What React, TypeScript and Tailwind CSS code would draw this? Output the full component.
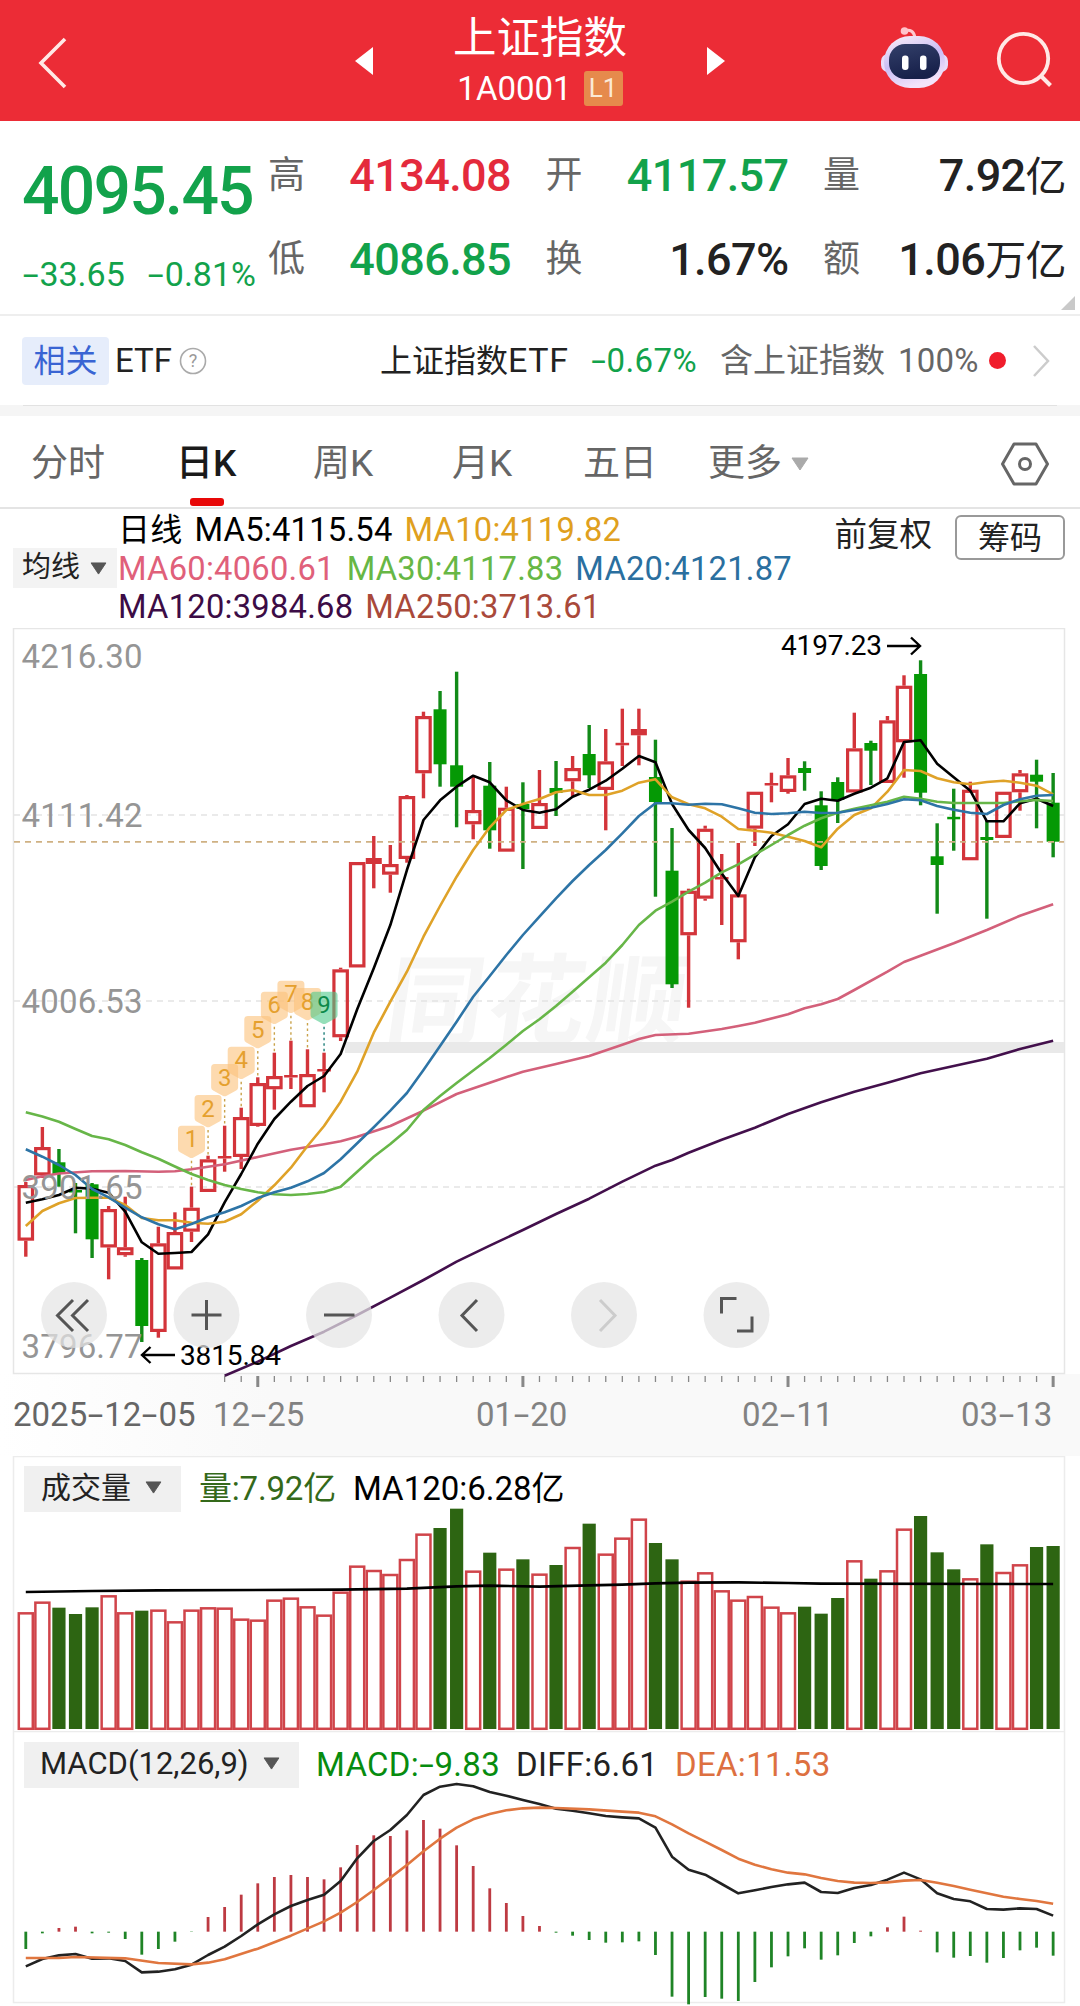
import type { ReactNode } from 'react'

type Candle = [kind: 'r' | 'g', high: number, top: number, bottom: number, low: number]

const FONT = 'font-[Roboto,"Noto_Sans_CJK_SC",sans-serif]'
const RED = '#d3343a'
const GREEN = '#059905'

const X0 = 25.8
const STEP = 16.57
const xAt = (i: number) => X0 + i * STEP

const candles: Candle[] = [
  ['r', 1182, 1185, 1240.7, 1256.7], ['r', 1127, 1147, 1175.5, 1178], ['g', 1149, 1162.3, 1174, 1186.7],
  ['g', 1183, 1190, 1192.5, 1233.3], ['g', 1183, 1184.3, 1239.3, 1258], ['r', 1206, 1209, 1247.5, 1279.3],
  ['r', 1196.7, 1247.2, 1255.2, 1256.7], ['g', 1258, 1260, 1326, 1342], ['r', 1226.7, 1243.3, 1332, 1337.7],
  ['r', 1212.3, 1232, 1269.5, 1269], ['r', 1186.7, 1207.7, 1231.7, 1242], ['r', 1155.7, 1159.3, 1192, 1192],
  ['r', 1125.7, 1156, 1158.5, 1171.7], ['r', 1107.7, 1117, 1157, 1169], ['r', 1077.3, 1083, 1126, 1126.7],
  ['r', 1052.7, 1076, 1089.3, 1109.7], ['r', 1040.7, 1075, 1077.5, 1089], ['r', 1049.3, 1074, 1107.3, 1107],
  ['r', 1052.7, 1069, 1071.5, 1092.3], ['r', 967.7, 969.3, 1037.3, 1041], ['r', 862, 862, 967.5, 967],
  ['r', 836, 858, 864, 888.3], ['r', 845, 864, 874.7, 892.7], ['r', 795, 796, 859, 862.7],
  ['r', 711.7, 716, 773.3, 798.3], ['g', 691, 709.3, 764.3, 786.7], ['g', 671.7, 765.3, 786.7, 827.3],
  ['r', 776, 810, 824.3, 839.3], ['g', 762, 785.7, 830.3, 848.7], ['r', 786.7, 807.7, 851.7, 851],
  ['g', 782.3, 804, 809, 869], ['r', 770, 803, 829, 829], ['g', 761, 788, 793, 816],
  ['r', 756, 768, 781.3, 796.7], ['g', 725, 754, 775.3, 788], ['r', 729, 761.3, 790, 830.3],
  ['r', 708.7, 742.8, 745.3, 766], ['r', 708.7, 729, 735.3, 765.3], ['g', 739.7, 777, 802, 896.7],
  ['g', 828, 870.7, 984.3, 988], ['r', 888.7, 890.7, 935.3, 1007.7], ['r', 825.7, 828.7, 898.7, 900.7],
  ['r', 854, 877, 879.5, 925], ['r', 843, 894.3, 942.3, 959.3], ['r', 792, 791.7, 828.7, 846],
  ['r', 772.7, 783, 785.5, 802.3], ['r', 758, 775.3, 792, 793.7], ['g', 761.3, 768, 773, 790.7],
  ['g', 791.3, 805.3, 866, 870], ['g', 777.3, 782, 800, 823], ['r', 712.7, 748.3, 792.5, 792],
  ['g', 740.7, 743, 750.7, 785], ['r', 716, 720.3, 783, 782.7], ['r', 675.3, 685.7, 742.3, 777.7],
  ['g', 660.3, 674, 792.7, 805.3], ['g', 823.3, 856.3, 865, 913.7], ['g', 788.7, 816.8, 819.3, 850.7],
  ['r', 781.7, 789.7, 860.3, 860], ['g', 820, 837, 840, 918.7], ['r', 792, 791.7, 838, 838],
  ['r', 770, 773.3, 792.3, 810.7], ['g', 759.7, 774.7, 781.7, 828.3], ['g', 773, 802.7, 841.7, 857.3],
]

const ma5 = [
  1202.7, 1199.3, 1195, 1187.7, 1188.7, 1192.7, 1211.7, 1242.3, 1253.7, 1253, 1252, 1234.3, 1202.3, 1174, 1143.7,
  1119, 1101.7, 1086, 1076, 1054, 1009.3, 968.3, 925, 870, 820, 800.3, 786.7, 775.7, 782.3, 800.3, 810, 812.7,
  809.3, 796.7, 789.7, 780.7, 768.7, 756, 762.3, 804, 830, 848, 873.5, 896, 857.3, 836, 824.3, 804, 798.7, 800.7,
  793.7, 787.7, 778.3, 742, 740.3, 763.7, 777.3, 790.7, 821.3, 821.3, 803.3, 798.7, 806,
]
const ma10 = [
  1226, 1211, 1203.3, 1198, 1197.7, 1197.7, 1205, 1218, 1220.3, 1220.3, 1222.7, 1223.7, 1221.7, 1214.3, 1200.7,
  1185.3, 1167.7, 1146, 1126, 1101.7, 1071.7, 1032.7, 1001.7, 971.7, 936.7, 906, 876.7, 850, 827.3, 810, 804, 799,
  792.3, 790, 795, 795, 790.7, 782.7, 779.3, 797.3, 804.3, 808.3, 816.7, 829, 830.7, 832.7, 836.7, 841, 847.3,
  828.7, 815, 808.3, 791.7, 770, 771, 778.3, 782.3, 784.3, 782, 780.7, 782.7, 785.7, 794.3,
]
const ma20 = [
  1149.3, 1156.7, 1165, 1175, 1189, 1197.3, 1207.7, 1217.3, 1224.3, 1229.3, 1224, 1217.3, 1212.3, 1206, 1198,
  1192.3, 1187.7, 1181.3, 1173, 1159.3, 1143.3, 1127.3, 1110.7, 1093, 1070, 1046, 1021.7, 996.7, 976, 955, 935,
  916.7, 898.3, 881, 865, 850, 833.3, 816, 803.3, 803.3, 804.7, 803.7, 804.3, 808.3, 812.7, 814, 813.3, 811.7,
  813, 812.7, 810, 807.7, 804, 799.3, 800.3, 806, 809.7, 812.7, 814, 805, 799.3, 795.7, 795,
]
const ma30 = [
  1112.3, 1116.5, 1121.7, 1129, 1136, 1139.3, 1145, 1152.3, 1158.7, 1166.5, 1174, 1180, 1185, 1189, 1192.3, 1194.3,
  1195, 1194, 1192, 1186.7, 1171.7, 1156.7, 1144, 1130, 1110, 1096, 1083, 1070.5, 1058, 1044.7, 1031, 1019.3, 1006,
  991.7, 977.3, 962.7, 945, 925, 910.7, 901.7, 891.7, 882.7, 872.3, 864.3, 854.7, 845, 835, 825.7, 818.3, 812.7,
  808.7, 805.3, 801.7, 796.7, 798.7, 801.7, 803, 803, 803, 803, 801.3, 800, 801,
]

// sparse averages: [index, y]
const ma60: [number, number][] = [
  [0, 1180], [1, 1176.3], [2, 1173.5], [4, 1171.3], [6, 1171], [8, 1171.7], [9, 1171.3], [10, 1169.3], [12, 1164.3],
  [14, 1157], [16, 1149.7], [18, 1144.3], [19, 1141.3], [20, 1136.7], [22, 1126], [24, 1110.7], [26, 1094],
  [28, 1082.7], [30, 1071.7], [32, 1064], [34, 1056], [36, 1044.7], [37, 1039], [38, 1035], [40, 1033.7],
  [42, 1029], [43, 1026], [44, 1022.7], [46, 1014.3], [47, 1008.3], [48, 1004.3], [49, 999], [50, 990],
  [52, 971.7], [53, 962], [54, 955.7], [56, 943.3], [58, 930], [60, 915.7], [61, 910], [62, 904.3],
]
const ma120: [number, number][] = [
  [12, 1375.7], [14, 1361.7], [16, 1346], [18, 1331.7], [20, 1315], [22, 1297.7], [24, 1280], [26, 1261.7],
  [28, 1245.7], [30, 1230], [32, 1214], [34, 1198.7], [36, 1181.7], [38, 1165.7], [39, 1160], [40, 1152.7],
  [42, 1139.7], [44, 1127.7], [46, 1114], [48, 1102.3], [50, 1091.7], [52, 1082.7], [54, 1073.3], [56, 1066],
  [58, 1058.7], [60, 1049], [62, 1040.7],
]

// TD sequence marks: index is 10 + n
const marks = [1125.7, 1095, 1064, 1046.7, 1016, 991.7, 980.7, 988, 991.7]

// volume and MACD values are stored in thirds of a pixel
const volumes = [
  487, 455, -473, -492, -472, 436, 487, -482, 479, 514, 479, 472, 473, 506, 509, 449, 443, 469, 494, 425, 347, 360,
  372, 327, 251, -234, -176, 362, -308, 356, -328, 371, -345, 291, -221, 311, 263, 206, -279, -328, 392, 367, 421,
  449, 438, 470, 487, -470, -491, -444, 331, -386, 361, 236, -198, -307, -358, 385, -283, 366, 343, -291, -288,
]
const volumeMa: [number, number][] = [
  [0, 426], [4, 423], [8, 421], [19, 419], [23, 416], [26, 409], [28, 407], [31, 410], [34, 406], [36, 404],
  [38, 400], [40, 398], [43, 397], [46, 399], [48, 401], [62, 402],
]
const macd = [
  657, 610, 594, 590, 610, 608, 627, 674, 657, 635, 606, 561, 531, 494, 460, 441, 435, 441, 448, 412, 345, 316, 318,
  301, 270, 296, 346, 408, 475, 519, 558, 588, 608, 617, 630, 638, 637, 634, 675, 800, 823, 801, 806, 813, 756, 712,
  679, 655, 689, 676, 639, 619, 592, 560, 602, 667, 683, 678, 698, 684, 661, 653, 677,
]
const diff = [
  709, 687, 676, 672, 686, 685, 693, 727, 725, 718, 704, 675, 650, 618, 583, 553, 528, 510, 494, 453, 385, 333, 300,
  255, 195, 170, 162, 169, 186, 197, 210, 222, 236, 242, 250, 258, 262, 265, 293, 380, 419, 434, 462, 490, 481, 471,
  463, 458, 486, 489, 474, 465, 449, 428, 448, 490, 507, 514, 537, 539, 535, 537, 557,
]
const dea: [number, number][] = [
  [0, 684], [2, 684], [3, 681], [6, 685], [8, 699], [10, 703], [11, 698], [12, 688], [14, 656], [16, 617], [18, 574],
  [19, 548], [20, 516], [21, 480], [22, 443], [23, 405], [24, 364], [25, 326], [26, 293], [27, 268], [28, 252],
  [29, 241], [30, 235], [31, 233], [32, 234], [34, 238], [36, 245], [37, 248], [38, 259], [39, 283], [40, 310],
  [41, 335], [42, 360], [43, 386], [44, 404], [45, 418], [46, 428], [47, 433], [48, 444], [49, 453], [50, 458],
  [51, 459], [52, 457], [53, 452], [54, 450], [55, 458], [56, 468], [57, 479], [58, 490], [59, 500], [60, 507],
  [61, 513], [62, 521],
]

const dense = (ys: number[]) => ys.map((y, i) => `${xAt(i)},${y}`).join(' ')
const sparse = (pts: [number, number][]) => pts.map(([i, y]) => `${xAt(i)},${y}`).join(' ')

function Line({ points, color, width = 2.6 }: { points: string; color: string; width?: number }) {
  return <polyline points={points} fill="none" stroke={color} strokeWidth={width} strokeLinejoin="round" />
}

function Dash({ wide = false }: { wide?: boolean }) {
  return <span className={wide ? 'inline-block scale-x-[1.7] mx-[4px]' : 'inline-block scale-x-[1.6] mx-[3px]'}>-</span>
}

function Caret({ className }: { className: string }) {
  return (
    <svg viewBox="0 0 18 14" className={className}>
      <path d="M1 1h16L9 13z" fill="currentColor" stroke="currentColor" strokeLinejoin="round" />
    </svg>
  )
}

function Header() {
  return (
    <header className="flex h-[121px] bg-[#ec2c36] text-white">
      <svg viewBox="0 0 340 121" className="w-[340px] h-[121px]">
        <path d="M65 39L41 63l24 24" fill="none" stroke="#ffe9e6" strokeWidth="3.6" />
      </svg>
      <div className="flex w-[400px] items-center justify-between pl-[15px] pr-[15px]">
        <svg viewBox="0 0 18 28" className="w-[18px] h-[28px]">
          <path d="M18 0v28L0 14z" fill="#fff" />
        </svg>
        <div className="flex flex-col items-center pt-[7px]">
          <div className="h-[64px] text-[43.5px] leading-[64px]">上证指数</div>
          <div className="flex h-[50px] items-start gap-[12px]">
            <span className="text-[33px] leading-[36px]">1A0001</span>
            <span className="flex h-[35px] w-[39px] items-center justify-center rounded-[3px] bg-[#e68a4c] text-[26px] text-[#fbe9d6]">
              L1
            </span>
          </div>
        </div>
        <svg viewBox="0 0 18 28" className="w-[18px] h-[28px]">
          <path d="M0 0v28l18-14z" fill="#fff" />
        </svg>
      </div>
      <svg viewBox="740 0 340 121" className="w-[340px] h-[121px]">
        <defs>
          <linearGradient id="head" x1="0" y1="0" x2="0.4" y2="1">
            <stop offset="0" stopColor="#fff3f8" />
            <stop offset="0.55" stopColor="#c9bdf5" />
            <stop offset="1" stopColor="#f3e3fa" />
          </linearGradient>
          <linearGradient id="visor" x1="0" y1="0" x2="0.3" y2="1">
            <stop offset="0" stopColor="#33406a" />
            <stop offset="1" stopColor="#17204a" />
          </linearGradient>
        </defs>
        <path d="M904 31c6-2 10 0 11 7" fill="none" stroke="#ffc9cf" strokeWidth="3" />
        <circle cx="904.5" cy="31" r="3.8" fill="#ffc3cb" />
        <rect x="881" y="54" width="67" height="18" rx="7" fill="#e9dcfa" />
        <rect x="884" y="36" width="61" height="52" rx="26" fill="url(#head)" />
        <rect x="889" y="44" width="51" height="35" rx="16" fill="url(#visor)" />
        <rect x="902" y="55.500" width="6.500" height="14.500" rx="3" fill="#fff" />
        <rect x="920" y="55.500" width="6.500" height="14.500" rx="3" fill="#fff" />
        <circle cx="1023.500" cy="58.500" r="24.700" fill="none" stroke="#ffe9e6" strokeWidth="3.800" />
        <path d="M1040.500 75.500l10 10" stroke="#ffe9e6" strokeWidth="4" />
      </svg>
    </header>
  )
}

function Stat({ label, value, unit, color }: { label: string; value: string; unit?: ReactNode; color: string }) {
  return (
    <div className="flex items-center justify-between">
      <span className="text-[37px] text-[#666]">{label}</span>
      <span className={`text-[45px] font-medium tracking-[-0.6px] whitespace-nowrap ${color}`}>
        {value}
        {unit && <span className="text-[41px] font-normal">{unit}</span>}
      </span>
    </div>
  )
}

function Quote() {
  return (
    <section className="relative flex h-[195px] border-b-2 border-[#eee] pl-[22px] pr-[14px]">
      <div className="w-[246px] text-[#12a24b]">
        <div className="pt-[32px] text-[66px] leading-[78px] font-medium tracking-[-1.8px]">4095.45</div>
        <div className="mt-[23px] flex justify-between pr-[12px] text-[34px] leading-[40px] whitespace-nowrap">
          <span><Dash wide />33.65</span>
          <span><Dash wide />0.81%</span>
        </div>
      </div>
      <div className="grid h-[181px] flex-1 grid-cols-[243px_243px_243px] grid-rows-2 justify-between pt-[13px]">
        <Stat label="高" color="text-[#e42a3c]" value="4134.08" />
        <Stat label="开" color="text-[#12a24b]" value="4117.57" />
        <Stat label="量" color="text-[#222]" value="7.92" unit="亿" />
        <Stat label="低" color="text-[#12a24b]" value="4086.85" />
        <Stat label="换" color="text-[#222]" value="1.67%" />
        <Stat label="额" color="text-[#222]" value="1.06" unit="万亿" />
      </div>
      <svg viewBox="0 0 14 14" className="absolute right-[5px] bottom-[4px] w-[14px] h-[14px]">
        <path d="M14 0v14H0z" fill="#c9c9c9" />
      </svg>
    </section>
  )
}

function EtfRow() {
  return (
    <section className="h-[100px] bg-[#f5f5f5]">
      <div className="flex h-[89px] items-center bg-white px-[22px] text-[32px] whitespace-nowrap text-[#222]">
        <span className="flex h-[48px] w-[87px] items-center justify-center rounded-[4px] bg-[#e6edfb] text-[#3964d3]">相关</span>
        <span className="ml-[6px] w-[58px] text-[33px]">ETF</span>
        <svg viewBox="0 0 28 28" className="ml-[6px] w-[28px] h-[28px]">
          <circle cx="14" cy="14" r="12.500" fill="none" stroke="#aaa" strokeWidth="1.600" />
          <text x="14" y="20" textAnchor="middle" fontSize="18" fill="#999">?</text>
        </svg>
        <span className="ml-[173px] w-[189px]">
          上证指数<span className="text-[34px] tracking-[0.6px]">ETF</span>
        </span>
        <span className="ml-[22px] w-[109px] text-[33px] tracking-[0.4px] text-[#12a24b]"><Dash />0.67%</span>
        <span className="ml-[20px] w-[178px] text-[33px] text-[#666]">含上证指数</span>
        <span className="w-[82px] text-[33px] tracking-[0.2px] text-[#666]">100%</span>
        <span className="ml-[9px] h-[17px] w-[17px] rounded-full bg-[#f01d2c]" />
        <svg viewBox="0 0 18 34" className="ml-[26px] w-[18px] h-[34px]">
          <path d="M2 2l14 15L2 32" fill="none" stroke="#ccc" strokeWidth="2.500" />
        </svg>
      </div>
      <div className="mx-[23px] h-px bg-[#e2e2e2]" />
    </section>
  )
}

function Tabs() {
  return (
    <nav className="flex h-[93px] items-center border-b-2 border-[#e4e4e4] pt-[5px] pl-[31px] text-[37px] whitespace-nowrap text-[#666]">
      <span className="w-[145px]">分时</span>
      <span className="relative w-[137px] font-medium text-[#1a1a1a]">
        日K
        <span className="absolute top-[62px] left-[14px] h-[8px] w-[34px] rounded-[3px] bg-[#e80808]" />
      </span>
      <span className="w-[139px]">周K</span>
      <span className="w-[131px]">月K</span>
      <span className="w-[125px]">五日</span>
      <span>更多</span>
      <Caret className="ml-[8px] w-[20px] h-[14px] text-[#aaa]" />
      <svg viewBox="0 0 48 44" className="ml-auto mr-[31px] w-[48px] h-[44px]">
        <path d="M13 2h22l11.500 20L35 42H13L1.500 22z" fill="none" stroke="#666" strokeWidth="3" strokeLinejoin="round" />
        <circle cx="24" cy="22" r="5.500" fill="none" stroke="#666" strokeWidth="3" />
      </svg>
    </nav>
  )
}

function Legend() {
  return (
    <section className="flex h-[119px] pl-[13px] pr-[15px] text-[32px] whitespace-nowrap">
      <div className="mt-[39px] flex h-[40px] w-[104px] items-center bg-[#f3f3f3] pl-[9px] text-[29px] text-[#222]">
        均线
        <Caret className="ml-[10px] w-[17px] h-[13px] text-[#555]" />
      </div>
      <div className="ml-px flex-1 text-[32.700px] leading-[38.500px] tracking-[0.250px]">
        <div className="mt-[2px] flex gap-[12px] text-black">
          <span className="flex gap-[12px]">
            <span className="text-[32px]">日线</span>
            <span className="w-[198px]">MA5:4115.54</span>
          </span>
          <span className="text-[#e0a01e]">MA10:4119.82</span>
        </div>
        <div className="flex gap-[12px]">
          <span className="text-[#e0607a]">MA60:4060.61</span>
          <span className="text-[#67b745]">MA30:4117.83</span>
          <span className="text-[#2a6f9f]">MA20:4121.87</span>
        </div>
        <div className="flex gap-[12px]">
          <span className="text-[#3c0c46]">MA120:3984.68</span>
          <span className="text-[#a9493a]">MA250:3713.61</span>
        </div>
      </div>
      <div className="flex items-start gap-[23px] pt-[6px] text-[#222]">
        <span className="text-[32.500px] leading-[40px]">前复权</span>
        <span className="flex h-[45px] w-[110px] items-center justify-center rounded-[6px] border-2 border-[#999]">筹码</span>
      </div>
    </section>
  )
}

function Bar({ i, data }: { i: number; data: Candle }) {
  const [kind, high, top, bottom, low] = data
  const x = xAt(i)
  const h = bottom - top
  if (kind === 'g') {
    return (
      <g fill={GREEN}>
        <rect x={x - 1.7} y={high} width="3.4" height={low - high} fill="#128a18" />
        <rect x={x - 6.5} y={top} width="13" height={h} />
      </g>
    )
  }
  return (
    <g fill={RED}>
      <rect x={x - 1.7} y={high} width="3.4" height={Math.max(0, top - high)} />
      <rect x={x - 1.7} y={bottom} width="3.4" height={Math.max(0, low - bottom)} />
      {h < 7.5 ? (
        <rect x={h < 3 ? x - 6.8 : x - 8} y={top} width={h < 3 ? 13.6 : 16} height={h} />
      ) : (
        <rect x={x - 6.7} y={top + 1.6} width="13.4" height={h - 3.2} fill="none" stroke={RED} strokeWidth="3.2" />
      )}
    </g>
  )
}

function Mark({ n, top }: { n: number; top: number }) {
  const x = xAt(9 + n)
  const last = n === 9
  return (
    <g>
      <path d={`M${x} ${top + 35}V${candles[9 + n][1]}`} stroke={last ? '#1f7f7a' : '#c9a24a'} strokeWidth="1.400" strokeDasharray="2.500 3" />
      <path
        d={`M${x - 10} ${top}h20q3.500 0 3.500 3.500v20q0 2-2 3l-9.500 5.200q-2 1-4 0l-9.500-5.200q-2-1-2-3v-20q0-3.500 3.500-3.500z`}
        fill={last ? '#4fc98a' : '#fcc27a'}
        fillOpacity="0.6"
      />
      <text x={x} y={top + 21.5} textAnchor="middle" fontSize="24" fill={last ? '#0d8a4a' : '#e5a02e'}>
        {n}
      </text>
    </g>
  )
}

const priceLabels: [string, number][] = [
  ['4216.30', 668], ['4111.42', 826.5], ['4006.53', 1012.7], ['3901.65', 1198.5], ['3796.77', 1357.5],
]

const controls = [
  <path d="M73 1300l-15.500 15.500L73 1331M88 1300l-15.500 15.500L88 1331" />,
  <path d="M191.500 1315h30M206.500 1300v30" />,
  <path d="M324 1315h30.500" />,
  <path d="M477 1300l-15 15.500 15 15.500" />,
  <path d="M600 1300l15 15.500-15 15.500" stroke="#ccc" />,
  <path d="M721.500 1313.500v-15h15M752 1316.500v14.500h-15" />,
]

function DateLabel({ x, parts, dark = false }: { x: number; parts: string[]; dark?: boolean }) {
  return (
    <foreignObject x={x} y="1394" width="200" height="42">
      <div className={`text-[33px] leading-[42px] whitespace-nowrap ${dark ? 'text-[#666]' : 'text-[#828282]'}`}>
        {parts.map((part, i) => (
          <span key={i}>
            {i > 0 && <Dash wide />}
            {part}
          </span>
        ))}
      </div>
    </foreignObject>
  )
}

function PriceChart() {
  return (
    <svg viewBox="0 628 1080 828" className="block w-[1080px] h-[828px]">
      <defs>
        <linearGradient id="axis">
          <stop offset="0" stopColor="#fff" />
          <stop offset="0.25" stopColor="#f9f9f9" />
        </linearGradient>
      </defs>
      <rect x="0" y="1374" width="1080" height="82" fill="url(#axis)" />
      <rect x="13.500" y="628.500" width="1051" height="745" fill="#fff" stroke="#e6e6e6" strokeWidth="1.500" />
      <text x="385" y="1036" fontSize="98" fontWeight="700" fill="#f6f6f6" textLength="300" transform="skewX(-8) translate(143 0)">
        同花顺
      </text>
      <rect x="345" y="1042" width="719" height="11" fill="#e9e9e9" />
      {[815, 1001, 1187].map((y) => (
        <path key={y} d={`M14 ${y}H1064`} stroke="#e4e4e4" strokeWidth="1.400" strokeDasharray="6 5" />
      ))}

      {candles.map((c, i) => (
        <Bar key={i} i={i} data={c} />
      ))}
      <path d="M14 841.800H1064" stroke="#cfb183" strokeWidth="1.800" strokeDasharray="6 5" />
      {marks.map((top, i) => (
        <Mark key={i} n={i + 1} top={top} />
      ))}
      <Line points={sparse(ma60)} color="#d3607a" />
      <Line points={sparse(ma120)} color="#43104c" />
      <Line points={dense(ma5)} color="#000" />
      <Line points={dense(ma10)} color="#dfa228" />
      <Line points={dense(ma30)} color="#67b648" />
      <Line points={dense(ma20)} color="#2d74a6" />

      {priceLabels.map(([label, y]) => (
        <text key={label} x="21.500" y={y} fontSize="33" fill="#959595" textLength="121">
          {label}
        </text>
      ))}
      <text x="781" y="655" fontSize="28" textLength="101">4197.23</text>
      <path d="M887 646h32M911 637.500l9 8.500-9 8.500" fill="none" stroke="#000" strokeWidth="2.400" />
      <text x="180" y="1365" fontSize="28" textLength="101">3815.84</text>
      <path d="M175 1355h-32M150.500 1347l-8.500 8 8.500 8" fill="none" stroke="#000" strokeWidth="2.400" />

      {controls.map((icon, i) => (
        <g key={i} fill="none" stroke="#555" strokeWidth="3">
          <circle cx={74 + i * 132.5} cy="1315" r="33" fill="#e4e4e4" fillOpacity="0.72" stroke="none" />
          {icon}
        </g>
      ))}

      {candles.map((_, i) => {
        if (i < 12) return null
        const major = i % 16 === 14
        return <path key={i} d={`M${xAt(i)} 1376V${major ? 1387 : 1382}`} stroke="#888" strokeWidth={major ? 3 : 1.3} />
      })}
      <DateLabel x={13} parts={['2025', '12', '05']} dark />
      <DateLabel x={213} parts={['12', '25']} />
      <DateLabel x={476} parts={['01', '20']} />
      <DateLabel x={742} parts={['02', '11']} />
      <DateLabel x={961} parts={['03', '13']} />
    </svg>
  )
}

function VolumePanel() {
  const y = (v: number) => 1450 + v / 3
  return (
    <section className="relative h-[275px]">
      <svg viewBox="0 1456 1080 275" className="absolute inset-0 w-[1080px] h-[275px]">
        <path d="M13.500 1731V1456.500H1064.500V1731" fill="none" stroke="#ececec" strokeWidth="1.500" />
        {volumes.map((v, i) =>
          v < 0 ? (
            <rect key={i} x={xAt(i) - 6.6} y={y(-v)} width="13.2" height={1729 - y(-v)} fill="#2d6512" />
          ) : (
            <rect key={i} x={xAt(i) - 7} y={y(v) + 1} width="14" height={1727.8 - y(v)} fill="#fff" stroke="#d0444a" strokeWidth="2.5" />
          ),
        )}
        <Line points={sparse(volumeMa.map(([i, v]) => [i, y(v)]))} color="#000" />
      </svg>
      <div className="relative flex items-center pt-[8px] pl-[24px] text-[33px] whitespace-nowrap">
        <span className="flex h-[46px] w-[157px] items-center bg-[#f0f0f0] pb-[2px] pl-[17px] text-[30px] text-[#222]">
          成交量
          <Caret className="ml-[14px] w-[17px] h-[13px] text-[#555]" />
        </span>
        <span className="ml-[18px] w-[138px] tracking-[-0.200px] text-[#34691a]">量:7.92亿</span>
        <span className="ml-[16px] text-black">MA120:6.28亿</span>
      </div>
    </section>
  )
}

function MacdPanel() {
  const y = (v: number) => 1730 + v / 3
  return (
    <section className="relative h-[275px]">
      <svg viewBox="0 1731 1080 275" className="absolute inset-0 w-[1080px] h-[275px]">
        <rect x="13.500" y="1731.500" width="1051" height="271" fill="none" stroke="#ececec" strokeWidth="1.500" />
        {macd.map((v, i) => (
          <rect
            key={i}
            x={xAt(i) - 1.4}
            y={Math.min(y(v), y(605))}
            width="2.8"
            height={Math.abs(v - 605) / 3}
            fill={v < 605 ? '#bd3a42' : '#1f8426'}
          />
        ))}
        <Line points={dense(diff.map(y))} color="#222" />
        <Line points={sparse(dea.map(([i, v]) => [i, y(v)]))} color="#e0763f" />
      </svg>
      <div className="relative flex items-center pt-[9px] pl-[24px] text-[33px] tracking-[0.300px] whitespace-nowrap">
        <span className="flex h-[46px] w-[275px] items-center bg-[#f0f0f0] pb-[2px] pl-[16px] text-[31px] tracking-normal text-[#222]">
          <span className="w-[207px]">MACD(12,26,9)</span>
          <Caret className="ml-[16px] w-[17px] h-[13px] text-[#555]" />
        </span>
        <span className="ml-[17px] w-[184px] text-[#078c0f]">MACD:<Dash />9.83</span>
        <span className="ml-[16px] w-[141px] text-[#222]">DIFF:6.61</span>
        <span className="ml-[18px] text-[#dd7040]">DEA:11.53</span>
      </div>
    </section>
  )
}

export default function App() {
  return (
    <main className={`w-[1080px] h-[2006px] overflow-hidden bg-white ${FONT}`}>
      <Header />
      <Quote />
      <EtfRow />
      <Tabs />
      <Legend />
      <PriceChart />
      <VolumePanel />
      <MacdPanel />
    </main>
  )
}
